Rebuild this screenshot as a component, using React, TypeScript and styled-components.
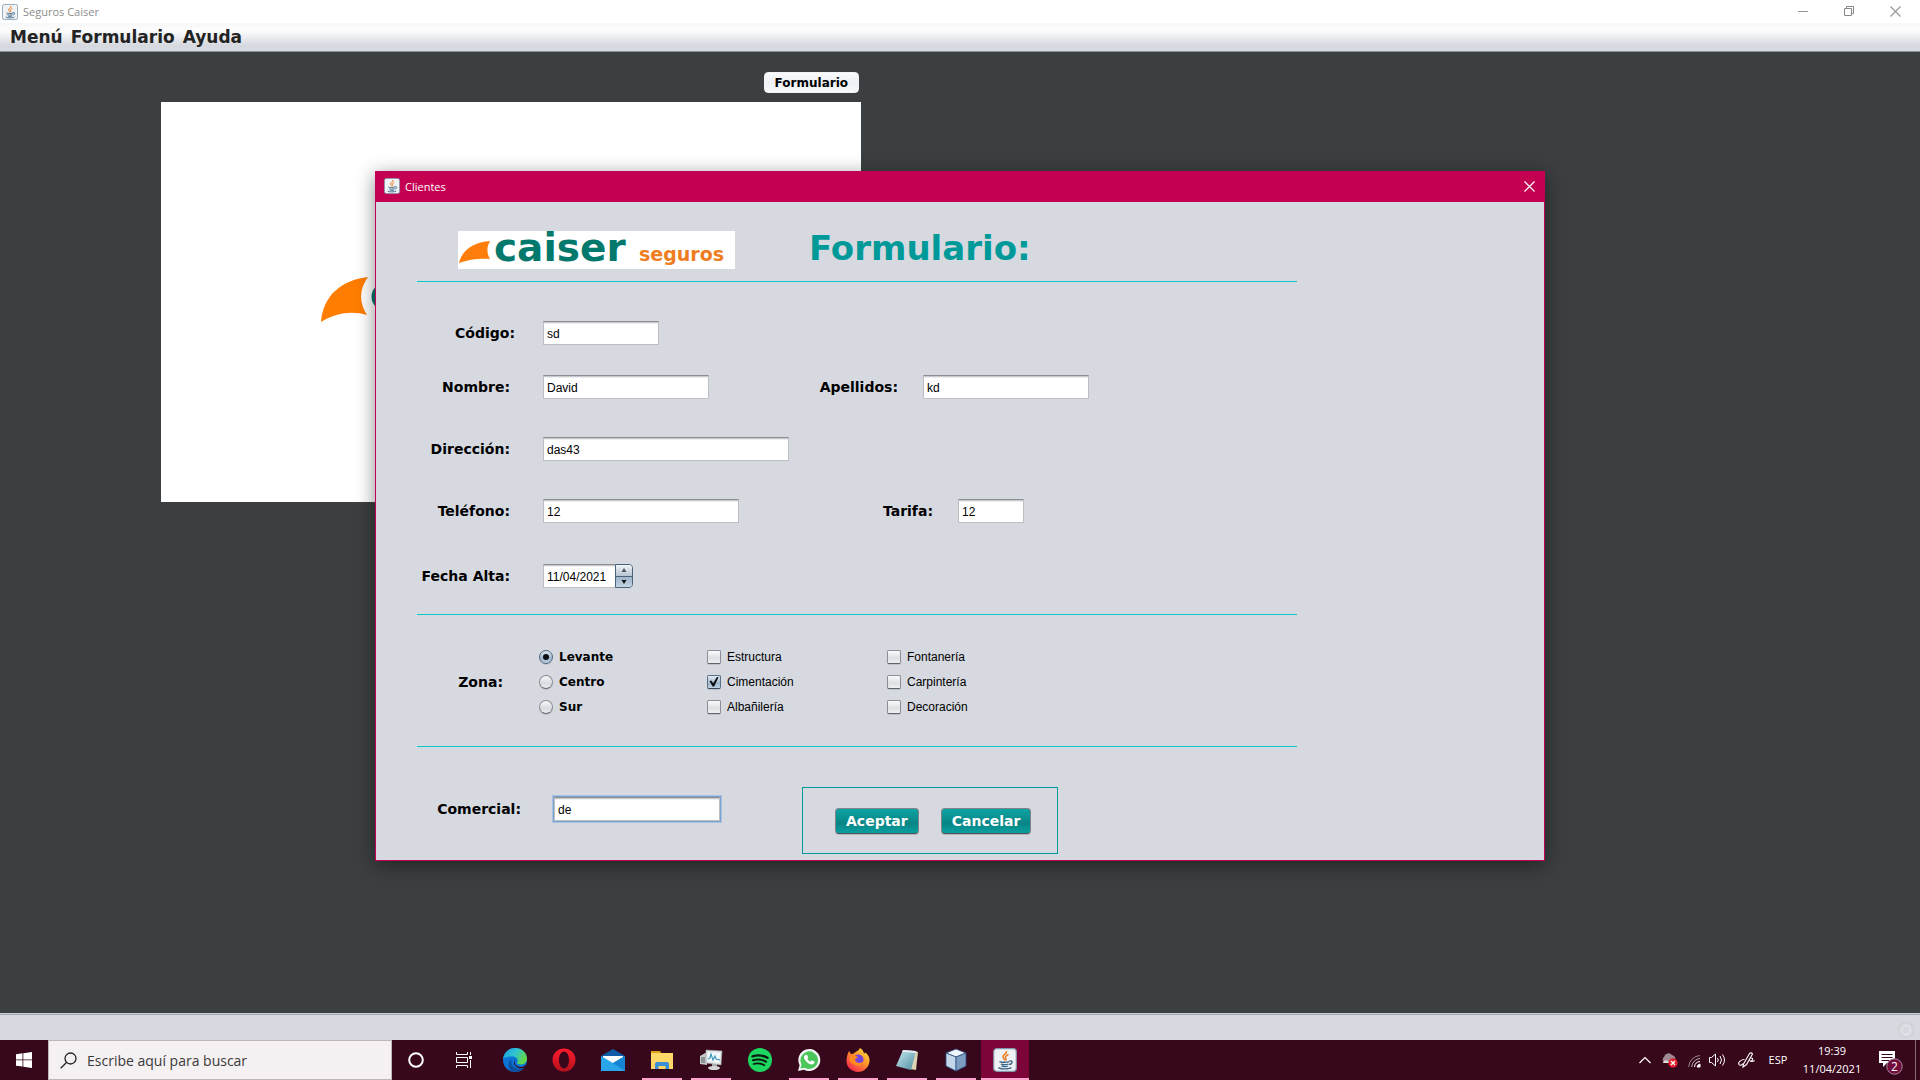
import React from "react";
import styled, { createGlobalStyle, css } from "styled-components";

const ui = `"Open Sans", "Noto Sans", sans-serif`;
const display = `"DejaVu Sans", sans-serif`;
const plain = `"Liberation Sans", Arial, sans-serif`;

const color = {
  desk: "#3c3f41",
  panel: "#d6d9e0",
  crimson: "#c40052",
  teal: "#009999",
  line: "#0fc6cb",
  task: "#37071c",
  taskActive: "#7d0438",
  underline: "#ffa5cd",
};

const GlobalStyle = createGlobalStyle`
  * { box-sizing: border-box; }
  body { margin: 0; background: ${color.desk}; }
  button, input { font: inherit; color: inherit; margin: 0; }
  svg { display: block; flex: none; overflow: visible; }
`;

const Screen = styled.div`
  position: relative;
  min-height: 100vh;
  display: flex;
  flex-direction: column;
  font-family: ${ui};
  font-size: 12px;
  color: #000;
  overflow: hidden;
`;

/* ---------- main window ---------- */

const TitleBar = styled.header`
  height: 23px;
  display: flex;
  align-items: center;
  gap: 5px;
  padding: 0 2px;
  background: #fff;
  color: #8c8c8c;
  font-size: 11px;
`;

const WindowTitle = styled.h1`
  flex: 1;
  margin: 0;
  font-size: inherit;
  font-weight: 400;
`;

const WindowButton = styled.button`
  width: 46px;
  height: 22px;
  display: grid;
  place-items: center;
  padding: 0;
  border: 0;
  background: none;
`;

const WindowButtons = styled.div`
  display: flex;
`;

const MenuBar = styled.nav`
  height: 29px;
  display: flex;
  align-items: center;
  gap: 8px;
  padding: 0 10px;
  background: linear-gradient(#f7f7f8 0, #fefefe 7px, #eceef1 14px, #d6d9df 22px, #d6d9df 100%);
  border-bottom: 1px solid #8b9097;
`;

const MenuButton = styled.button`
  padding: 0;
  border: 0;
  background: none;
  font: bold 17px/20px ${display};
  color: #232323;
`;

const Desk = styled.main`
  flex: 1;
  padding: 20px 161px;
  background: ${color.desk};
`;

const Workspace = styled.div`
  max-width: 700px;
  display: flex;
  flex-direction: column;
  gap: 9px;
`;

const LaunchButton = styled.button`
  align-self: flex-end;
  height: 21px;
  margin-right: 2px;
  padding: 1px 10px 0;
  border: 1px solid #f2f4f8;
  border-radius: 4px;
  background: linear-gradient(#fbfbfd, #eef0f5 50%, #f6f8fb);
  font: bold 12px/18px ${display};
`;

const Splash = styled.section`
  height: 400px;
  padding: 174px 160px;
  background: #fff;
`;

const StatusBar = styled.footer`
  height: 27px;
  display: flex;
  align-items: center;
  justify-content: flex-end;
  padding: 5px 5px 0;
  background: ${color.panel};
  border-top: 1px solid #c9ccd2;
  box-shadow: inset 0 1px #a4a8b0;
`;

/* ---------- dialog ---------- */

const Dialog = styled.section`
  position: absolute;
  top: 171px;
  left: 0;
  right: 0;
  width: 1170px;
  max-width: 100%;
  margin: 0 auto;
  border: 1px solid ${color.crimson};
  background: ${color.panel};
  box-shadow: 0 4px 18px rgba(0, 0, 0, 0.45);
`;

const DialogBar = styled.header`
  height: 30px;
  display: flex;
  align-items: center;
  gap: 5px;
  padding: 0 0 2px 8px;
  background: ${color.crimson};
  color: #fff;
`;

const DialogTitle = styled.h2`
  flex: 1;
  margin: 0;
  font-size: 11px;
  font-weight: 400;
`;

const DialogClose = styled.button`
  width: 30px;
  height: 28px;
  display: grid;
  place-items: center;
  padding: 0;
  border: 0;
  background: none;
`;

const Form = styled.form`
  max-width: 921px;
  padding-left: 41px;
`;

const Section = styled.div<{ $pad: string; $last?: boolean }>`
  padding: ${(p) => p.$pad};
  ${(p) => !p.$last && css`border-bottom: 1px solid ${color.line};`}
`;

const Heading = styled(Section)`
  display: flex;
  align-items: flex-start;
  gap: 74px;
`;

const LogoBox = styled.div`
  width: 277px;
  height: 38px;
  background: #fff;
`;

const FormTitle = styled.h3`
  margin: 0;
  font: bold 34px/34px ${display};
  color: ${color.teal};
`;

const Row = styled.div<{ $top?: number }>`
  display: flex;
  align-items: center;
  margin-top: ${(p) => p.$top ?? 0}px;
`;

const Closing = styled(Section)`
  display: flex;
  align-items: flex-start;
`;

const Caption = styled.label<{ $end: number; $gap: number }>`
  width: ${(p) => p.$end}px;
  margin-right: ${(p) => p.$gap}px;
  display: flex;
  justify-content: flex-end;
  white-space: nowrap;
  font: bold 14px/16px ${display};
`;

const TextInput = styled.input<{ $w: number; $focus?: boolean }>`
  width: ${(p) => p.$w}px;
  height: 24px;
  padding: 1px 3px 0;
  border: 1px solid #bcbec3;
  border-top-color: #8d8e92;
  border-radius: 0;
  background: #fff;
  box-shadow: inset 0 1px #c9cacd, inset 0 2px #efefef
    ${(p) => p.$focus && ", 0 0 0 1px #7aa3d2, 0 0 0 2px #a9c2df"};
  font: 12px/16px ${plain};
  outline: none;
`;

const Spinner = styled.div`
  display: flex;
`;

const DateInput = styled(TextInput)`
  border-right: 0;
`;

const Steps = styled.div`
  width: 18px;
  height: 24px;
  display: flex;
  flex-direction: column;
  border: 1px solid #4b637a;
  border-radius: 0 4px 4px 0;
  overflow: hidden;
`;

const Step = styled.button<{ $down?: boolean }>`
  flex: 1;
  display: grid;
  place-items: center;
  padding: 0;
  border: 0;
  background: ${(p) => (p.$down ? "linear-gradient(#9fb5c9, #c3d6e6)" : "linear-gradient(#f0f4f8, #b4c3d1)")};
  ${(p) => p.$down && css`border-top: 1px solid #4b637a;`}
`;

const Choices = styled.div`
  display: grid;
  grid-template-columns: 168px 180px 1fr;
  grid-auto-rows: 25px;
  flex: 1;
  align-items: center;
`;

const Choice = styled.label<{ $strong?: boolean }>`
  display: flex;
  align-items: center;
  gap: 6px;
  font: ${(p) => (p.$strong ? `bold 12px/16px ${display}` : `12px/16px ${plain}`)};
`;

const Radio = styled.input`
  appearance: none;
  width: 14px;
  height: 14px;
  display: grid;
  place-items: center;
  border: 1px solid #8b8e95;
  border-bottom-color: #63666d;
  border-radius: 50%;
  background: linear-gradient(#fafafb, #d9dbe0 60%, #eceef0);
  box-shadow: 0 1px #bfc2c8;
  &:checked {
    border-color: #51657b;
    background: linear-gradient(#dfe7ef, #9fb6cb 60%, #bfd2e2);
  }
  &:checked::after {
    content: "";
    width: 6px;
    height: 6px;
    border-radius: 50%;
    background: #0c1014;
  }
`;

const Check = styled.input`
  appearance: none;
  width: 14px;
  height: 14px;
  display: grid;
  place-items: center;
  border: 1px solid #8b8e95;
  border-bottom-color: #5d6168;
  border-radius: 2px;
  background: linear-gradient(#fbfbfc, #dddfe3 60%, #f0f1f3);
  box-shadow: 0 1px #bfc2c8;
  &:checked {
    border-color: #5b7086;
    border-bottom-color: #34495f;
    background: linear-gradient(#e3ebf2, #9fb6cb 60%, #bfd2e2);
  }
  &:checked::after {
    content: "";
    width: 10px;
    height: 10px;
    background: #0c1014;
    clip-path: polygon(5% 45%, 22% 40%, 42% 68%, 82% 0, 98% 0, 52% 100%, 36% 100%);
  }
`;

const Actions = styled.div`
  display: flex;
  gap: 22px;
  margin-left: 82px;
  padding: 20px 26px 19px 32px;
  border: 1px solid ${color.teal};
`;

const ActionButton = styled.button`
  height: 26px;
  padding: 0 10px 1px;
  border: 1px solid #7e8388;
  border-bottom-color: #4d5256;
  border-radius: 4px;
  background: linear-gradient(#0ea3a3, #088585 60%, #0aa0a0);
  box-shadow: 0 1px #b5b9bf;
  font: bold 14px/22px ${display};
  color: #fff;
`;

/* ---------- taskbar ---------- */

const TaskBar = styled.nav`
  height: 40px;
  display: flex;
  background: ${color.task};
  color: #fff;
`;

const TaskButton = styled.button<{ $open?: boolean; $active?: boolean }>`
  width: 48px;
  display: grid;
  place-items: center;
  padding: 0;
  border: 0;
  background: ${(p) => (p.$active ? color.taskActive : "transparent")};
  ${(p) =>
    p.$open &&
    css`
      background-image: linear-gradient(${color.underline}, ${color.underline});
      background-repeat: no-repeat;
      background-position: bottom;
      background-size: ${p.$active ? "100%" : "40px"} 2px;
    `}
`;

const Search = styled.label`
  width: 344px;
  display: flex;
  align-items: center;
  gap: 10px;
  padding: 0 12px 0 11px;
  background: #f5f1f3;
  border: 1px solid #bcb6b9;
  color: #2b2b2b;
`;

const SearchInput = styled.input`
  flex: 1;
  min-width: 0;
  padding: 1px 0 0;
  border: 0;
  background: none;
  outline: none;
  font: 14px/20px ${ui};
  &::placeholder { color: #3a3a3a; opacity: 1; }
`;

const Apps = styled.div`
  flex: 1;
  display: flex;
  gap: 1px;
  padding-left: 3px;
`;

const Tray = styled.div`
  display: flex;
  align-items: center;
  gap: 8px;
  padding-right: 4px;
`;

const TrayButton = styled.button<{ $w: number }>`
  width: ${(p) => p.$w}px;
  height: 40px;
  display: flex;
  align-items: center;
  justify-content: center;
  padding: 0;
  border: 0;
  background: none;
  font: 11px/18px ${ui};
`;

const Clock = styled.time`
  width: 70px;
  text-align: center;
  font: 11px/18px ${ui};
`;

const DesktopEdge = styled.div`
  width: 1px;
  height: 40px;
  background: #8a6a78;
`;

/* ---------- drawings ---------- */

const JavaIcon = ({ size = 16 }: { size?: number }) => (
  <svg width={size} height={size} viewBox="0 0 24 24" fill="none">
    <rect x=".7" y=".7" width="22.6" height="22.6" rx="3" fill="#eff3f6" stroke="#8298aa" strokeWidth="1.2" />
    <path d="M13.5 3c1 3-4.500 3.500-3.500 6 .4 1.200 1.800 2 1.500 3.300M15.500 6.500c-2 .8-3.500 2-2.800 3.300.6 1 .8 1.700-.2 2.700" stroke="#ee7a1c" strokeWidth="1.5" />
    <path d="M6.500 13.500c1 1 8.500 1 10 0M8 16c1 .9 6 .9 7.500 0M8.500 18c1.200.8 5 .8 6.500 0M5.500 19.500c1.500 1.900 11 1.700 13 0M16.500 13c4-.8 3 3.200-.5 3.500" stroke="#3d6788" strokeWidth="1.400" />
  </svg>
);

const Cross = ({ stroke }: { stroke: string }) => (
  <svg width="11" height="11" viewBox="0 0 11 11" stroke={stroke} fill="none" strokeWidth="1.2">
    <path d="M.5.5l10 10M10.500.5l-10 10" />
  </svg>
);

const CaiserLogo = () => (
  <svg width="277" height="38" viewBox="0 0 277 38" role="img" aria-label="Caiser Seguros">
    <path d="M1 32C4 19 16 11 32 10c-4 7-3 13 0 18-9-1-21 0-31 4z" fill="#ff7d0a" />
    <text x="36" y="30" fontFamily="DejaVu Sans" fontWeight="700" fontSize="39" fill="#03786c">caiser</text>
    <text x="181" y="30" fontFamily="DejaVu Sans" fontWeight="700" fontSize="19" fill="#ee7d22">seguros</text>
  </svg>
);

const SplashLogo = () => (
  <svg width="80" height="48" viewBox="0 0 80 48">
    <path d="M0 46C2 20 20 4 47 1c-9 13-9 25-1 38-14-4-30-3-46 7z" fill="#ff7d00" />
    <path d="M67 11c-18-4-18 24 0 18" fill="none" stroke="#03786c" strokeWidth="6" />
  </svg>
);

const apps: { name: string; open?: boolean; active?: boolean; art: React.ReactNode }[] = [
  {
    name: "Edge",
    art: (
      <svg width="24" height="24" viewBox="0 0 24 24">
        <defs>
          <linearGradient id="edgeTop" x1="0" y1="0" x2="1" y2=".4">
            <stop offset="0" stopColor="#1b9de2" /><stop offset=".55" stopColor="#2fc3cf" /><stop offset="1" stopColor="#62d64a" />
          </linearGradient>
        </defs>
        <circle cx="12" cy="12" r="12" fill="#0c74d6" />
        <path d="M.2 10.500C1 4.500 6 0 12.200 0 19 0 24 5 24 10.500c0 4-3 6-6.500 6-2.700 0-4-1-3.300-2 1.800-3-.7-6-5-6-3.500 0-7 .8-9 2z" fill="url(#edgeTop)" />
        <path d="M8.500 11c-1.500 6 3 10.500 8.500 9.500 2-.3 4-1.300 5-1.800-2.500 4-7 5.800-11.500 5.200C4 22 4.500 14 8.500 11z" fill="#0d4f9e" />
        <path d="M12.500 10.500c-2 2.500-1 8.500 5 8.500 3.500 0 5-1.700 6.200-3L24 18.500l-2 1c-5.500 2.500-12-1-11-6z" fill={color.task} />
      </svg>
    ),
  },
  {
    name: "Opera",
    art: (
      <svg width="24" height="24" viewBox="0 0 24 24">
        <defs><linearGradient id="opera" x1="0" y1="0" x2="0" y2="1"><stop offset="0" stopColor="#ff1b2d" /><stop offset="1" stopColor="#b5101d" /></linearGradient></defs>
        <path fillRule="evenodd" d="M12 .5a11.500 11.500 0 100 23 11.500 11.500 0 000-23zm0 3c3 0 5 3.700 5 8.500s-2 8.500-5 8.500S7 16.800 7 12s2-8.500 5-8.500z" fill="url(#opera)" />
      </svg>
    ),
  },
  {
    name: "Correo",
    art: (
      <svg width="24" height="24" viewBox="0 0 24 24">
        <path d="M0 8l12-7 12 7v6H0z" fill="#0f5ba8" />
        <path d="M2 8h20v8H2z" fill="#fff" />
        <path d="M0 8l12 7 12-7v15H0z" fill="#2aa5ea" />
        <path d="M24 8v15L12 15z" fill="#1683d3" />
      </svg>
    ),
  },
  {
    name: "Explorador",
    open: true,
    art: (
      <svg width="24" height="24" viewBox="0 0 24 24">
        <path d="M1 3h9l2 3H1z" fill="#e0a018" />
        <path d="M1 5h22v16H1z" fill="#ffd768" />
        <path d="M5 21v-5q0-2 2-2h10q2 0 2 2v5h-3.500v-3h-7v3z" fill="#3b8fd6" />
      </svg>
    ),
  },
  {
    name: "Monitor",
    open: true,
    art: (
      <svg width="24" height="24" viewBox="0 0 24 24">
        <path d="M1 8l7-4v13l-7-1z" fill="#c5c9cb" />
        <path d="M2 9h4v6H2z" fill="#8d9496" />
        <path d="M7 2l16 1-1 14-15-2z" fill="#dfe3e3" stroke="#9da3a5" strokeWidth=".6" />
        <path d="M8.500 4l13 .8-.8 10-12.200-1.500z" fill="#f4fafc" />
        <path d="M9 11l2-1 1-4 2 6 2-4 1 3 4 1" fill="none" stroke="#3b93be" strokeWidth="1.100" />
        <path d="M13 16h5v3h-5z" fill="#a9adae" /><ellipse cx="15" cy="20" rx="6" ry="2" fill="#d6d8d8" />
      </svg>
    ),
  },
  {
    name: "Spotify",
    art: (
      <svg width="24" height="24" viewBox="0 0 24 24" fill="none">
        <circle cx="12" cy="12" r="12" fill="#1ed760" />
        <path d="M4.500 8.300c5-1.500 10.500-1 15 1.500" stroke="#0c1a10" strokeWidth="2.400" strokeLinecap="round" />
        <path d="M5 12.300c4.500-1.300 9.300-.8 13 1.400" stroke="#0c1a10" strokeWidth="2" strokeLinecap="round" />
        <path d="M5.600 16c4-1 7.700-.6 10.800 1.200" stroke="#0c1a10" strokeWidth="1.700" strokeLinecap="round" />
      </svg>
    ),
  },
  {
    name: "WhatsApp",
    open: true,
    art: (
      <svg width="24" height="24" viewBox="0 0 24 24">
        <path d="M1 23l1.600-5.800A11 11 0 1112 23a11 11 0 01-5-1.300z" fill="#f4f4f4" />
        <path d="M3.500 20.500l1-4A8.800 8.800 0 1112 21a9 9 0 01-4.500-1.300z" fill="#4bc65b" />
        <path d="M8.500 7l1.500-.3 1.200 2.800-.9 1.200c.8 1.500 1.800 2.300 3.300 3l1.200-1.400 2.700 1.300c.2 2-1.500 3-3 2.900C11 16 7 12 7 9c0-1 .7-1.600 1.500-2z" fill="#fff" />
      </svg>
    ),
  },
  {
    name: "Firefox",
    open: true,
    art: (
      <svg width="24" height="24" viewBox="0 0 24 24">
        <defs><linearGradient id="fox" x1="1" y1="0" x2=".2" y2="1"><stop offset="0" stopColor="#fff04a" /><stop offset=".45" stopColor="#ff9a26" /><stop offset="1" stopColor="#f32153" /></linearGradient></defs>
        <path d="M3 3l2 3 3-.5C9.500 3 12 4 14 0c2.500 1.500 3.500 3.500 4 5.500l1.500-1C22.500 7 24 10 23.500 13.500 23 19 18 24 12 24S0 19 .5 12.500C.6 9 1.500 6 3 3z" fill="url(#fox)" />
        <circle cx="12.500" cy="11.500" r="5" fill="#7146d8" />
        <path d="M4 8c3-1 6-.5 8 1.500-1 .8-2.500.8-3 2 .5 3.500 5 4.500 8.500 2-1 4-6 5.500-9.500 3C4 15.500 3 12 4 8z" fill="#ff8a22" />
      </svg>
    ),
  },
  {
    name: "Bloc de notas",
    open: true,
    art: (
      <svg width="24" height="24" viewBox="0 0 24 24">
        <defs><linearGradient id="note" x1="0" y1="0" x2="1" y2="1"><stop offset="0" stopColor="#c9eaf1" /><stop offset="1" stopColor="#4d8da0" /></linearGradient></defs>
        <path d="M20 3l3 1-2 18-6-1z" fill="#dcd4b4" />
        <path d="M8 2l13 1-5 19-15-4z" fill="url(#note)" />
        <path d="M8 2l13 1-.5 2L7 3.800z" fill="#e9eff0" />
      </svg>
    ),
  },
  {
    name: "NetBeans",
    open: true,
    art: (
      <svg width="24" height="24" viewBox="0 0 24 24" stroke="#2d4f80" strokeWidth=".8">
        <path d="M12 1l10 4-10 4L2 5z" fill="#eef5fa" />
        <path d="M2 5l10 4v14L2 18z" fill="#c3d7ea" />
        <path d="M22 5L12 9v14l10-5z" fill="#7d9cc2" />
      </svg>
    ),
  },
  { name: "Java", open: true, active: true, art: <JavaIcon size={24} /> },
];

const zones: [string, string, string][] = [
  ["Levante", "Estructura", "Fontanería"],
  ["Centro", "Cimentación", "Carpintería"],
  ["Sur", "Albañilería", "Decoración"],
];

type FieldProps = { id: string; label: string; value: string; width: number; end?: number; gap?: number; focus?: boolean };

const Field = ({ id, label, value, width, end = 93, gap = 33, focus }: FieldProps) => (
  <>
    <Caption htmlFor={id} $end={end} $gap={gap}>{label}</Caption>
    <TextInput id={id} $w={width} $focus={focus} defaultValue={value} />
  </>
);

export default function App() {
  return (
    <Screen>
      <GlobalStyle />
      <TitleBar>
        <JavaIcon />
        <WindowTitle>Seguros Caiser</WindowTitle>
        <WindowButtons>
          <WindowButton aria-label="Minimizar">
            <svg width="10" height="11"><path d="M0 5.500h10" stroke="#999" /></svg>
          </WindowButton>
          <WindowButton aria-label="Restaurar">
            <svg width="11" height="11" fill="none" stroke="#888"><path d="M.5 2.500h7v7h-7zM2.500 2.500v-2h7v7h-2" /></svg>
          </WindowButton>
          <WindowButton aria-label="Cerrar"><Cross stroke="#999" /></WindowButton>
        </WindowButtons>
      </TitleBar>
      <MenuBar>
        <MenuButton>Menú</MenuButton>
        <MenuButton>Formulario</MenuButton>
        <MenuButton>Ayuda</MenuButton>
      </MenuBar>
      <Desk>
        <Workspace>
          <LaunchButton>Formulario</LaunchButton>
          <Splash><SplashLogo /></Splash>
        </Workspace>
      </Desk>
      <StatusBar>
        <svg width="18" height="18" fill="none"><circle cx="9" cy="9" r="7.500" stroke="#cfd1d4" strokeWidth="1.500" /><circle cx="9" cy="9" r="4.500" stroke="#e8eaed" /></svg>
      </StatusBar>

      <Dialog role="dialog" aria-labelledby="clientes">
        <DialogBar>
          <JavaIcon />
          <DialogTitle id="clientes">Clientes</DialogTitle>
          <DialogClose aria-label="Cerrar"><Cross stroke="#fff" /></DialogClose>
        </DialogBar>
        <Form onSubmit={(e) => e.preventDefault()}>
          <Heading $pad="29px 0 12px 41px">
            <LogoBox><CaiserLogo /></LogoBox>
            <FormTitle>Formulario:</FormTitle>
          </Heading>
          <Section $pad="39px 0 26px">
            <Row><Field id="codigo" label="Código:" value="sd" width={116} end={98} gap={28} /></Row>
            <Row $top={30}>
              <Field id="nombre" label="Nombre:" value="David" width={166} />
              <Field id="apellidos" label="Apellidos:" value="kd" width={166} end={189} gap={25} />
            </Row>
            <Row $top={38}><Field id="direccion" label="Dirección:" value="das43" width={246} /></Row>
            <Row $top={38}>
              <Field id="telefono" label="Teléfono:" value="12" width={196} />
              <Field id="tarifa" label="Tarifa:" value="12" width={66} end={194} gap={25} />
            </Row>
            <Row $top={41}>
              <Caption htmlFor="fecha" $end={93} $gap={33}>Fecha Alta:</Caption>
              <Spinner>
                <DateInput id="fecha" $w={72} defaultValue="11/04/2021" />
                <Steps>
                  <Step type="button" aria-label="Subir"><svg width="6" height="4"><path d="M3 0l2.500 4h-5z" fill="#555" /></svg></Step>
                  <Step type="button" aria-label="Bajar" $down><svg width="6" height="4"><path d="M3 4L.5 0h5z" fill="#111" /></svg></Step>
                </Steps>
              </Spinner>
            </Row>
          </Section>
          <Section $pad="29px 0 27px">
            <Row>
              <Caption as="span" $end={86} $gap={36}>Zona:</Caption>
              <Choices>
                {zones.map(([zone, first, second], i) => (
                  <React.Fragment key={zone}>
                    <Choice $strong><Radio type="radio" name="zona" defaultChecked={i === 0} />{zone}</Choice>
                    <Choice><Check type="checkbox" defaultChecked={i === 1} />{first}</Choice>
                    <Choice><Check type="checkbox" />{second}</Choice>
                  </React.Fragment>
                ))}
              </Choices>
            </Row>
          </Section>
          <Closing $pad="40px 0 6px" $last>
            <Row $top={10}>
              <Field id="comercial" label="Comercial:" value="de" width={166} end={104} gap={33} focus />
            </Row>
            <Actions>
              <ActionButton type="submit">Aceptar</ActionButton>
              <ActionButton type="button">Cancelar</ActionButton>
            </Actions>
          </Closing>
        </Form>
      </Dialog>

      <TaskBar>
        <TaskButton aria-label="Inicio">
          <svg width="16" height="16" fill="#fff"><path d="M0 2.200l6.500-.9v6.200H0zM7.300 1.200L16 0v7.500H7.300zM0 8.300h6.500v6.300L0 13.700zM7.300 8.300H16V16l-8.700-1.200z" /></svg>
        </TaskButton>
        <Search>
          <svg width="17" height="17" fill="none" stroke="#222" strokeWidth="1.300"><circle cx="10.500" cy="6.500" r="5.500" /><path d="M6.500 10.500L.7 16.300" /></svg>
          <SearchInput type="text" aria-label="Buscar" placeholder="Escribe aquí para buscar" />
        </Search>
        <TaskButton aria-label="Cortana">
          <svg width="16" height="16" fill="none"><circle cx="8" cy="8" r="6.800" stroke="#fff" strokeWidth="2" /></svg>
        </TaskButton>
        <TaskButton aria-label="Vista de tareas">
          <svg width="17" height="16" fill="none" stroke="#fff"><path d="M.5 0v2.500h11V0M.5 5.500h11v5H.5zM.5 16v-2.500h11V16M14.500 0v3M14.500 8v8" /><path d="M13 4h3v3h-3z" fill="#fff" stroke="none" /></svg>
        </TaskButton>
        <Apps>
          {apps.map((a) => (
            <TaskButton key={a.name} aria-label={a.name} $open={a.open} $active={a.active}>{a.art}</TaskButton>
          ))}
        </Apps>
        <Tray>
          <TrayButton $w={12} aria-label="Mostrar iconos">
            <svg width="12" height="8" fill="none" stroke="#fff" strokeWidth="1.200"><path d="M.5 7L6 1.500 11.500 7" /></svg>
          </TrayButton>
          <TrayButton $w={20} aria-label="Nube">
            <svg width="17" height="15"><path d="M3 9a3 3 0 010-5 4.500 4.500 0 018-2 4 4 0 012 7z" fill="#9d8a93" /><path d="M2 10c0-3 4-3 5-2l4 2z" fill="#e6dfe2" /><circle cx="12" cy="10" r="4.700" fill="#e0222f" /><path d="M10 8l4 4M14 8l-4 4" stroke="#fff" strokeWidth="1.300" /></svg>
          </TrayButton>
          <TrayButton $w={14} aria-label="Wifi">
            <svg width="13" height="13" fill="none" stroke="#fff"><path d="M.7 13A12 12 0 0112 1.500" opacity=".5" /><path d="M3.700 13A9 9 0 0112 4.500" opacity=".65" /><path d="M6.500 13A6 6 0 0112 7.500" /><path d="M9 13a4 4 0 013-3v3z" fill="#fff" /></svg>
          </TrayButton>
          <TrayButton $w={16} aria-label="Volumen">
            <svg width="17" height="14" fill="none" stroke="#fff"><path d="M.5 4.500h2l4-3.500v12l-4-3.500h-2zM8.500 5q1.500 2 0 4M11 3q3 4 0 8M13.500 1.500q4 5.500 0 11" /></svg>
          </TrayButton>
          <TrayButton $w={26} aria-label="Lápiz">
            <svg width="17" height="16" fill="none" stroke="#fff" strokeWidth="1.100"><path d="M5.500 12L11.500 1.500q2-1.500 3 .5L8.500 12.500 5 15zM6.500 7.500c-3 0-7 2.500-5.500 5 1 1.500 3 .5 4-1M12 6c4-.5 3 3 .5 3 1.500 1 3 .2 4-.5" /></svg>
          </TrayButton>
          <TrayButton $w={22}>ESP</TrayButton>
          <Clock>19:39<br />11/04/2021</Clock>
          <TrayButton $w={32} aria-label="2 notificaciones">
            <svg width="26" height="30" viewBox="0 0 26 30">
              <path d="M1 6h16v12H9l-4 4v-4H1z" fill="#fff" />
              <path d="M3.500 9.500h11M3.500 12.500h11M3.500 15.500h8" stroke={color.task} />
              <circle cx="16.500" cy="21.500" r="7.700" fill="#6f0a3a" stroke="#b0889a" />
              <text x="16.500" y="26" textAnchor="middle" fontFamily="Open Sans" fontSize="12" fill="#fff">2</text>
            </svg>
          </TrayButton>
          <DesktopEdge />
        </Tray>
      </TaskBar>
    </Screen>
  );
}
